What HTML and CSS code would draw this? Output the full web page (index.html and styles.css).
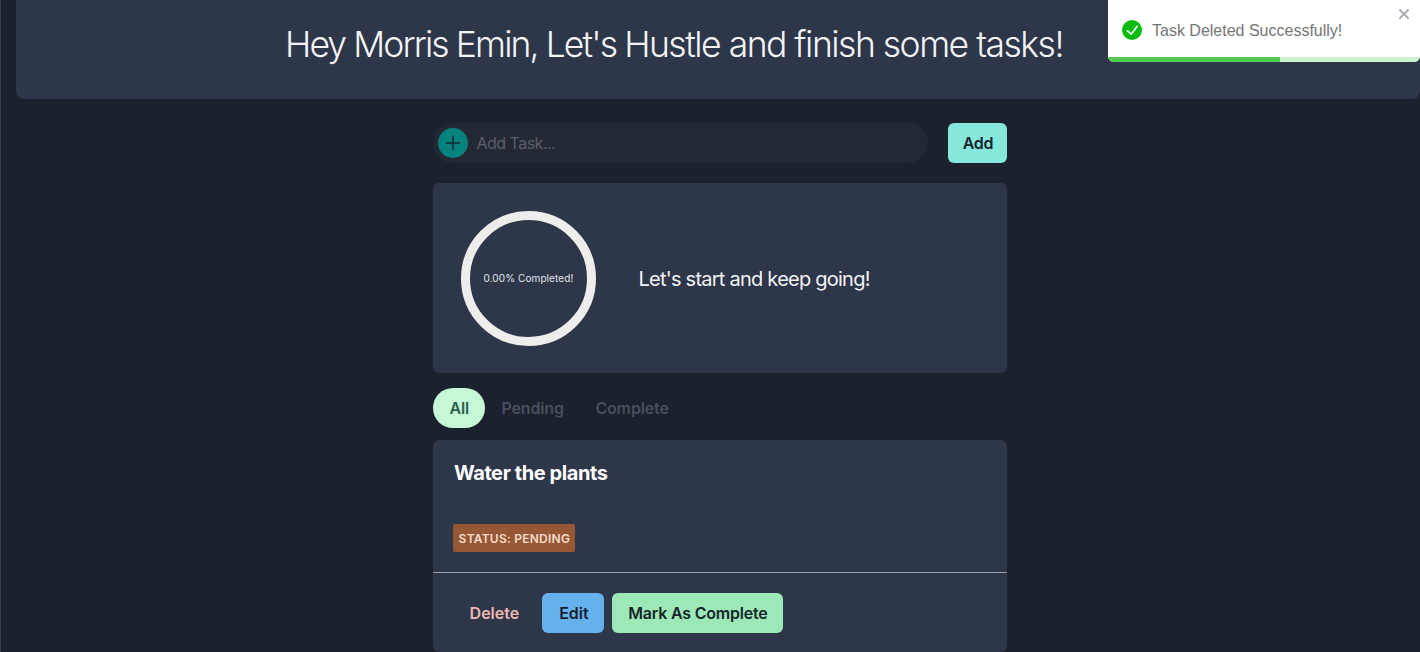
FILE: index.html
```html
<!DOCTYPE html>
<html lang="en">
<head>
<meta charset="utf-8">
<title>Tasks</title>
<link rel="stylesheet" href="styles.css">
</head>
<body>
<header class="banner"><h1 class="greeting"><span class="name">Hey Morris Emin, Let's </span>Hustle and finish some tasks!</h1></header>
<main class="content">
  <form class="add-form">
    <label class="field">
      <span class="plus"><svg width="16" height="16" viewBox="0 0 16 16"><path d="M8 .7v14.6M.7 8h14.6" stroke="#172b38" stroke-width="1.6" fill="none"/></svg></span>
      <span class="placeholder">Add Task...</span>
    </label>
    <button type="button" class="btn add"><span>Add</span></button>
  </form>
  <section class="card progress">
    <div class="ring"><span class="ring-text">0.00% Completed!</span></div>
    <p class="message"><span>Let's start and keep going!</span></p>
  </section>
  <nav class="tabs">
    <button type="button" class="tab active"><span>All</span></button>
    <button type="button" class="tab pending"><span>Pending</span></button>
    <button type="button" class="tab complete"><span>Complete</span></button>
  </nav>
  <article class="card task">
    <div class="task-body">
      <h2 class="task-title"><span>Water the plants</span></h2>
      <span class="badge">Status: Pending</span>
    </div>
    <footer class="actions">
      <button type="button" class="btn delete"><span>Delete</span></button>
      <button type="button" class="btn edit"><span>Edit</span></button>
      <button type="button" class="btn mark"><span>Mark As Complete</span></button>
    </footer>
  </article>
</main>
<aside class="toast">
  <div class="toast-body">
    <svg class="check" width="20" height="20" viewBox="0 0 24 24"><path fill="#07bc0c" d="M12 0a12 12 0 1012 12A12.014 12.014 0 0012 0zm6.927 8.2l-6.845 9.289a1.011 1.011 0 01-1.43.188l-4.888-3.908a1 1 0 111.25-1.562l4.076 3.261 6.227-8.451a1 1 0 111.61 1.183z"/></svg>
    <span class="toast-text">Task Deleted Successfully!</span>
    <svg class="close" width="12" height="12" viewBox="0 0 12 12"><path d="M1.4 1.4l9.2 9.2M10.6 1.4l-9.2 9.2" stroke="#a3a6ad" stroke-width="1.9" fill="none"/></svg>
  </div>
  <div class="toast-track"><div class="toast-bar"></div></div>
</aside>
</body>
</html>
```
FILE: styles.css
```css
* { box-sizing: border-box; }
body {
  margin: 0;
  height: 652px;
  overflow: hidden;
  background: #1b212d;
  border-left: 1px solid #363d4a;
  color: #f3f4f6;
  font-family: Inter, "Liberation Sans", sans-serif;
  font-size: 16px;
  line-height: 24px;
}
h1, h2, p { margin: 0; }
button { border: 0; background: none; font: inherit; color: inherit; white-space: nowrap; }
.banner {
  margin-left: 15px;
  height: 99px;
  padding: 22px 0 0 269px;
  border-radius: 0 0 8px 8px;
  background: #2e3649;
}
.greeting { font-size: 35.5px; font-weight: 300; line-height: 46px; letter-spacing: -1.5px; white-space: nowrap; }
.name { letter-spacing: -1.9px; }
.content { width: 574px; margin: 24px 0 0 432.4px; }
.add-form { display: flex; gap: 20px; height: 40px; }
.field {
  display: flex;
  align-items: center;
  gap: 8px;
  width: 495px;
  padding-left: 5px;
  border-radius: 20px;
  background: #232933;
}
.plus { display: flex; align-items: center; justify-content: center; width: 30px; height: 30px; border-radius: 50%; background: #06827f; }
.placeholder { color: #5a5f6a; letter-spacing: -0.5px; }
.btn { height: 40px; padding: 0; border-radius: 6px; font-weight: 600; text-align: center; }
.add { width: 59px; background: #85e8db; color: #14232e; letter-spacing: -0.3px; }
.card { border-radius: 6px; background: #2e3649; }
.progress { display: flex; align-items: center; gap: 42.5px; height: 190px; margin-top: 20px; padding-left: 27.6px; }
.ring { display: flex; align-items: center; justify-content: center; width: 135px; height: 135px; border: 9px solid #efedeb; border-radius: 50%; }
.ring-text { font-size: 10px; line-height: 14px; letter-spacing: 0.1px; white-space: nowrap; color: #e3e6ea; }
.message { padding-top: 2px; font-size: 20px; line-height: 30px; letter-spacing: -0.76px; white-space: nowrap; }
.tabs { display: flex; height: 40px; margin-top: 15px; }
.tab { height: 40px; padding: 0 16px; border-radius: 20px; font-weight: 600; color: #484f5d; text-align: left; letter-spacing: -0.15px; }
.active { width: 52px; background: #c6f7d6; color: #286149; letter-spacing: -0.1px; }
.pending { width: 94px; }
.complete { width: 106px; }
.task { height: 212px; margin-top: 12px; }
.task-body { display: flex; flex-direction: column; align-items: flex-start; justify-content: space-between; height: 133px; padding: 18px 20px 20px; border-bottom: 1px solid #9ba1ab; }
.task-title { padding-left: 0.6px; font-size: 20px; font-weight: 700; line-height: 30px; letter-spacing: -0.4px; color: #fff; }
.badge { width: 122px; height: 28px; border-radius: 2px; background: #965734; color: #f6dccb; font-size: 12px; font-weight: 600; line-height: 29px; letter-spacing: 0.24px; text-align: center; text-transform: uppercase; white-space: nowrap; }
.actions { display: flex; gap: 8px; padding: 20px; }
.delete { width: 81px; color: #efb9b0; }
.edit { width: 62px; background: #66b1ec; color: #14202e; }
.mark { width: 171px; background: #9ce8b7; color: #14252a; letter-spacing: -0.2px; }
.delete span, .edit span { padding-left: 1px; }
.toast { position: absolute; top: 0; right: 0; width: 312px; height: 62px; border-radius: 0 0 6px 6px; overflow: hidden; background: #fff; }
.toast-body { display: flex; height: 57px; padding: 0 10px 0 14px; }
.check { margin-top: 20px; }
.toast-text { flex: 1; margin: 18.5px 0 0 10px; color: #757575; font-family: "Liberation Sans", sans-serif; white-space: nowrap; }
.close { margin-top: 8px; }
.toast-track { height: 5px; background: #cdf2ce; }
.toast-bar { width: 172px; height: 5px; background: #52cb55; }
```
